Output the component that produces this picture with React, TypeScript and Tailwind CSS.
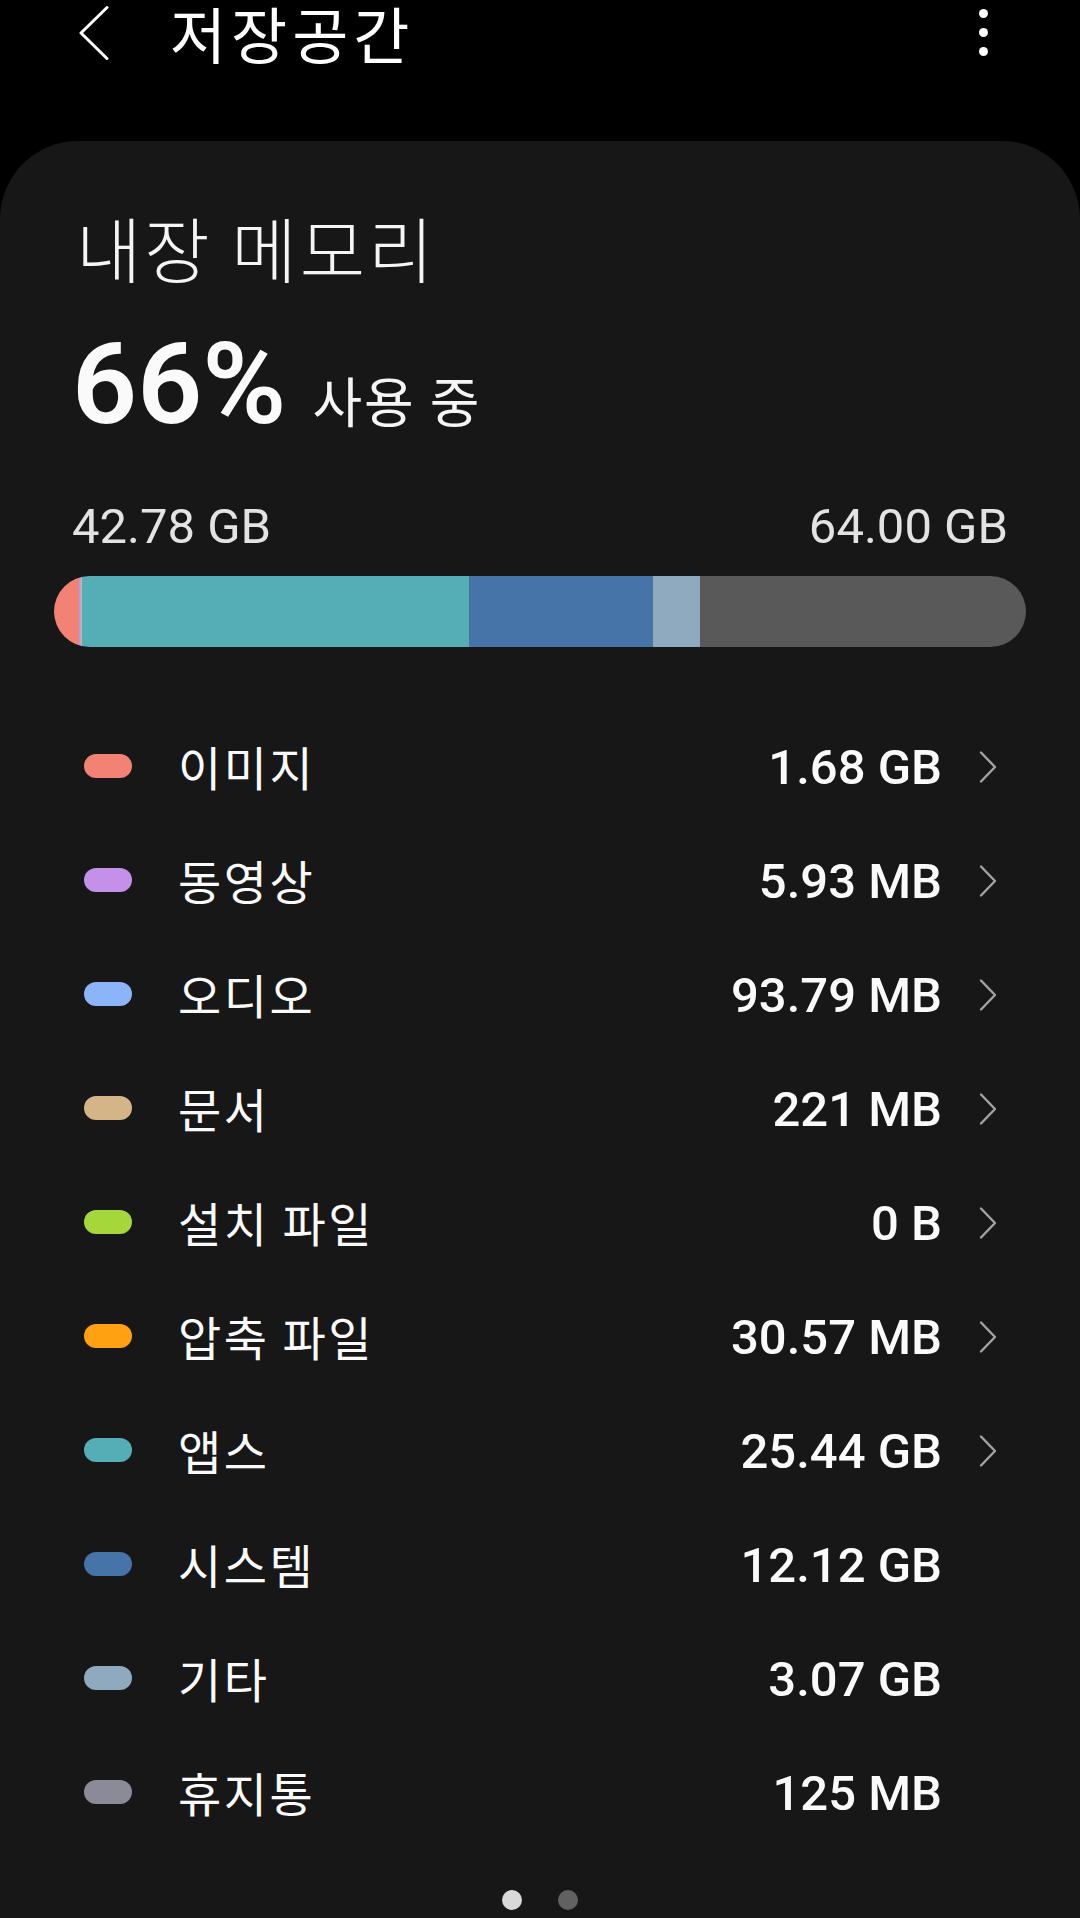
import React from "react";

const KR = { fontFamily: '"Noto Sans CJK KR", "Noto Sans", sans-serif' };
const RB = { fontFamily: 'Roboto, "Noto Sans", sans-serif' };

type Item = { label: string; value: string; color: string; chevron: boolean };

const items: Item[] = [
  { label: "이미지", value: "1.68 GB", color: "#f28374", chevron: true },
  { label: "동영상", value: "5.93 MB", color: "#c590ea", chevron: true },
  { label: "오디오", value: "93.79 MB", color: "#8cb4f8", chevron: true },
  { label: "문서", value: "221 MB", color: "#d3b587", chevron: true },
  { label: "설치 파일", value: "0 B", color: "#a6d73a", chevron: true },
  { label: "압축 파일", value: "30.57 MB", color: "#ffa110", chevron: true },
  { label: "앱스", value: "25.44 GB", color: "#55aeb6", chevron: true },
  { label: "시스템", value: "12.12 GB", color: "#4673a8", chevron: false },
  { label: "기타", value: "3.07 GB", color: "#8faabf", chevron: false },
  { label: "휴지통", value: "125 MB", color: "#8a8b97", chevron: false },
];

function Chevron() {
  return (
    <svg width="20" height="34" viewBox="0 0 20 34" fill="none">
      <path
        d="M3 2.5 L17 17 L3 31.5"
        stroke="#a3a3a3"
        strokeWidth="2.4"
        strokeLinecap="round"
        strokeLinejoin="round"
      />
    </svg>
  );
}

export default function App() {
  return (
    <div className="w-[1080px] h-[1918px] bg-black overflow-hidden flex flex-col">
      <header className="h-[65px] flex items-center pl-[79px] pr-[92px] shrink-0">
        <svg width="30" height="56" viewBox="0 0 30 56" fill="none">
          <path
            d="M28 2.5 L2 28 L28 53.5"
            stroke="#ffffff"
            strokeWidth="3"
            strokeLinecap="round"
            strokeLinejoin="round"
          />
        </svg>
        <h1
          className="ml-[61px] text-[61px] leading-[72px] tracking-[5px] text-white"
          style={KR}
        >
          저장공간
        </h1>
        <div className="ml-auto flex flex-col gap-[10px] items-center">
          <span className="block w-[9px] h-[9px] rounded-full bg-white" />
          <span className="block w-[9px] h-[9px] rounded-full bg-white" />
          <span className="block w-[9px] h-[9px] rounded-full bg-white" />
        </div>
      </header>

      <main className="mt-[76px] flex-1 bg-[#171717] rounded-t-[78px] pt-[64px] px-[72px] flex flex-col">
        <h2
          className="pl-[4px] text-[71px] leading-[82px] tracking-[3px] font-light text-[#f5f5f5]"
          style={KR}
        >
          내장 메모리
        </h2>

        <div className="mt-[39px] flex items-baseline">
          <span
            className="text-[114px] leading-[116px] font-semibold text-[#fafafa]"
            style={RB}
          >
            66%
          </span>
          <span
            className="ml-[26px] text-[54px] leading-none tracking-[2px] text-[#f5f5f5]"
            style={KR}
          >
            사용 중
          </span>
        </div>

        <div
          className="mt-[57px] flex justify-between text-[49px] leading-[56px] text-[#e3e3e3]"
          style={RB}
        >
          <span>42.78 GB</span>
          <span>64.00 GB</span>
        </div>

        <div className="mt-[21px] -mx-[18px] h-[71px] rounded-full overflow-hidden flex">
          <div className="w-[25px] bg-[#f28374]" />
          <div className="w-[1px] bg-[#c590ea]" />
          <div className="w-[1px] bg-[#8cb4f8]" />
          <div className="w-[1px] bg-[#d3b587]" />
          <div className="w-[387px] bg-[#55aeb6]" />
          <div className="w-[184px] bg-[#4673a8]" />
          <div className="w-[47px] bg-[#8faabf]" />
          <div className="flex-1 bg-[#595959]" />
        </div>

        <ul className="mt-[63px] flex flex-col">
          {items.map((it) => (
            <li key={it.label} className="h-[114px] flex items-center">
              <span
                className="ml-[12px] mb-[3px] w-[48px] h-[24px] rounded-full shrink-0"
                style={{ backgroundColor: it.color }}
              />
              <span
                className="ml-[46px] mb-[4px] text-[47px] leading-none tracking-[2.5px] text-[#fafafa]"
                style={KR}
              >
                {it.label}
              </span>
              <span
                className="ml-auto text-[49px] leading-none font-medium text-[#fafafa]"
                style={RB}
              >
                {it.value}
              </span>
              <span className="ml-[26px] w-[40px] flex justify-center">
                {it.chevron ? <Chevron /> : null}
              </span>
            </li>
          ))}
        </ul>

        <div className="mt-[40px] flex justify-center gap-[36px]">
          <span className="block w-[20px] h-[20px] rounded-full bg-[#d9d9d9]" />
          <span className="block w-[20px] h-[20px] rounded-full bg-[#616161]" />
        </div>
      </main>
    </div>
  );
}
